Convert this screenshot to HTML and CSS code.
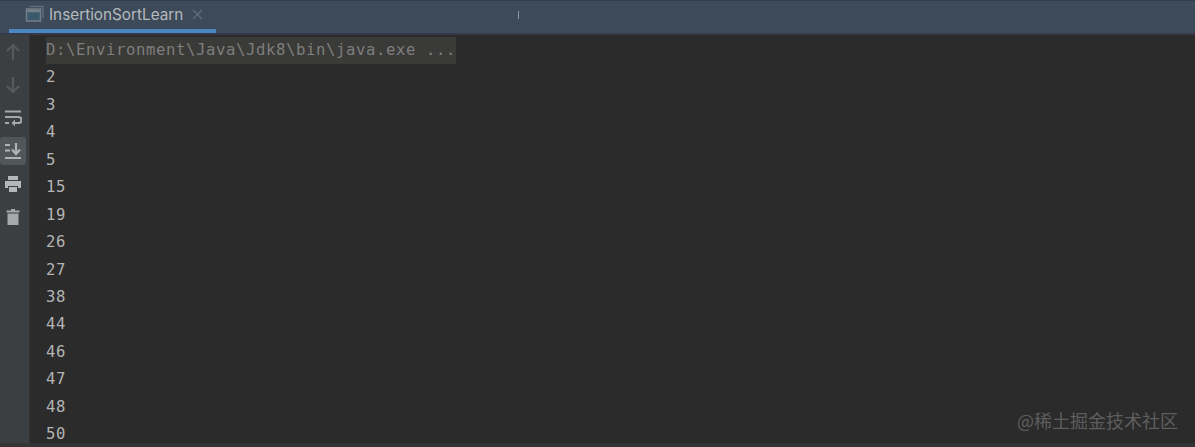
FILE: index.html
```html
<!DOCTYPE html>
<html lang="zh">
<head>
<meta charset="utf-8">
<title>InsertionSortLearn</title>
<link rel="stylesheet" href="styles.css">
</head>
<body>
<div class="tabbar">
  <div class="tab">
    <svg class="tab-icon" width="20" height="18" viewBox="0 0 20 18">
      <path d="M4.500 1.500h13.500v11.500" fill="none" stroke="#626e79" stroke-width="1.500"/>
      <rect x="1.500" y="4" width="14" height="12" fill="#3a5a6c" stroke="#747f89" stroke-width="1.500"/>
      <rect x="2.200" y="4.700" width="12.600" height="2.600" fill="#747f89"/>
    </svg>
    <span class="tab-name">InsertionSortLearn</span>
    <svg class="tab-close" width="11" height="11" viewBox="0 0 11 11">
      <path d="M1 1l9 9M10 1l-9 9" stroke="#5f6a75" stroke-width="1.500" fill="none"/>
    </svg>
  </div>
  <i class="caret"></i>
</div>
<div class="main">
  <aside class="tools">
    <button class="tool dim"><svg width="16" height="18" viewBox="0 0 16 18"><path d="M8 17V2M2 8l6-6 6 6" fill="none" stroke="#55595b" stroke-width="2.200"/></svg></button>
    <button class="tool dim"><svg width="16" height="18" viewBox="0 0 16 18"><path d="M8 1v15M2 10l6 6 6-6" fill="none" stroke="#55595b" stroke-width="2.200"/></svg></button>
    <button class="tool"><svg width="18" height="18" viewBox="0 0 18 18"><path d="M1 2.500h16M1 8h13.500a2.600 2.600 0 0 1 0 6H9M1 14h4" fill="none" stroke="#a6a9ab" stroke-width="2.200"/><path d="M11 10.500L7.500 14l3.500 3.500z" fill="#a6a9ab"/></svg></button>
    <button class="tool active"><svg width="18" height="18" viewBox="0 0 18 18"><path d="M1 3h5M1 8.500h5M1 16h16M12 1v10M8 7.500l4 4.500 4-4.500" fill="none" stroke="#b0b3b5" stroke-width="2.200"/></svg></button>
    <button class="tool"><svg width="18" height="18" viewBox="0 0 18 18"><path d="M4 1h10v4H4zM1 6h16v7h-3v-2H4v2H1zM5 12h8v5H5z" fill="#b4b7b9"/></svg></button>
    <button class="tool"><svg width="14" height="18" viewBox="0 0 14 18"><path d="M5 1h4v1.500h4.500v2H.5v-2H5zM1.500 5.500h11V17h-11z" fill="#a6a9ab"/></svg></button>
  </aside>
  <pre class="console"><span class="cmd">D:\Environment\Java\Jdk8\bin\java.exe ...</span>
2
3
4
5
15
19
26
27
38
44
46
47
48
50</pre>
  <div class="watermark">@稀土掘金技术社区</div>
</div>
<div class="footer"></div>
</body>
</html>
```
FILE: styles.css
```css
html, body {
  margin: 0;
  padding: 0;
  width: 1195px;
  height: 447px;
  overflow: hidden;
  background: #2b2b2b;
}
.tabbar {
  height: 35px;
  box-sizing: border-box;
  display: flex;
  align-items: flex-start;
  padding-left: 9px;
  background: #3d4a59;
  border-top: 1px solid #333e4a;
  border-bottom: 2px solid #37394a;
  position: relative;
}
.tab {
  width: 207px;
  height: 32px;
  box-sizing: border-box;
  display: flex;
  align-items: center;
  padding: 0 0 2px 16px;
  border-bottom: 4px solid #4a86c0;
}
.tab-icon { flex: none; }
.tab-name {
  margin-left: 4px;
  font: 15.300px "Inter", "Liberation Sans", sans-serif;
  color: #b4b9be;
}
.tab-close { margin-left: 9px; flex: none; }
.caret {
  position: absolute;
  left: 518px;
  top: 10px;
  width: 1px;
  height: 8px;
  background: #8a96a2;
}
.main {
  display: flex;
  height: 408px;
  position: relative;
}
.tools {
  width: 30px;
  flex: none;
  box-sizing: border-box;
  display: flex;
  flex-direction: column;
  align-items: flex-start;
  gap: 5px;
  padding-top: 3px;
  background: #3c3f41;
  border-right: 1px solid #323232;
}
.tool {
  width: 26px;
  height: 28px;
  padding: 0 1px 0 0;
  border: 0;
  border-radius: 3px;
  background: none;
  display: flex;
  align-items: center;
  justify-content: center;
}
.tool.active { background: #515658; }
.console {
  margin: 0;
  padding: 2px 0 0 16px;
  flex: 1;
  overflow: hidden;
  font: 15.600px/27.430px "DejaVu Sans Mono", "Liberation Mono", monospace;
  letter-spacing: 0.610px;
  color: #b4b4b4;
}
.cmd {
  display: inline-block;
  background: #3a3a38;
  color: #7e7e7c;
  height: 27px;
  vertical-align: top;
}
.watermark {
  position: absolute;
  right: 17px;
  bottom: 11px;
  font: 18px "Noto Sans CJK SC", sans-serif;
  color: #5e5e5e;
  line-height: 24px;
}
.footer {
  height: 4px;
  background: #333435;
}
```
